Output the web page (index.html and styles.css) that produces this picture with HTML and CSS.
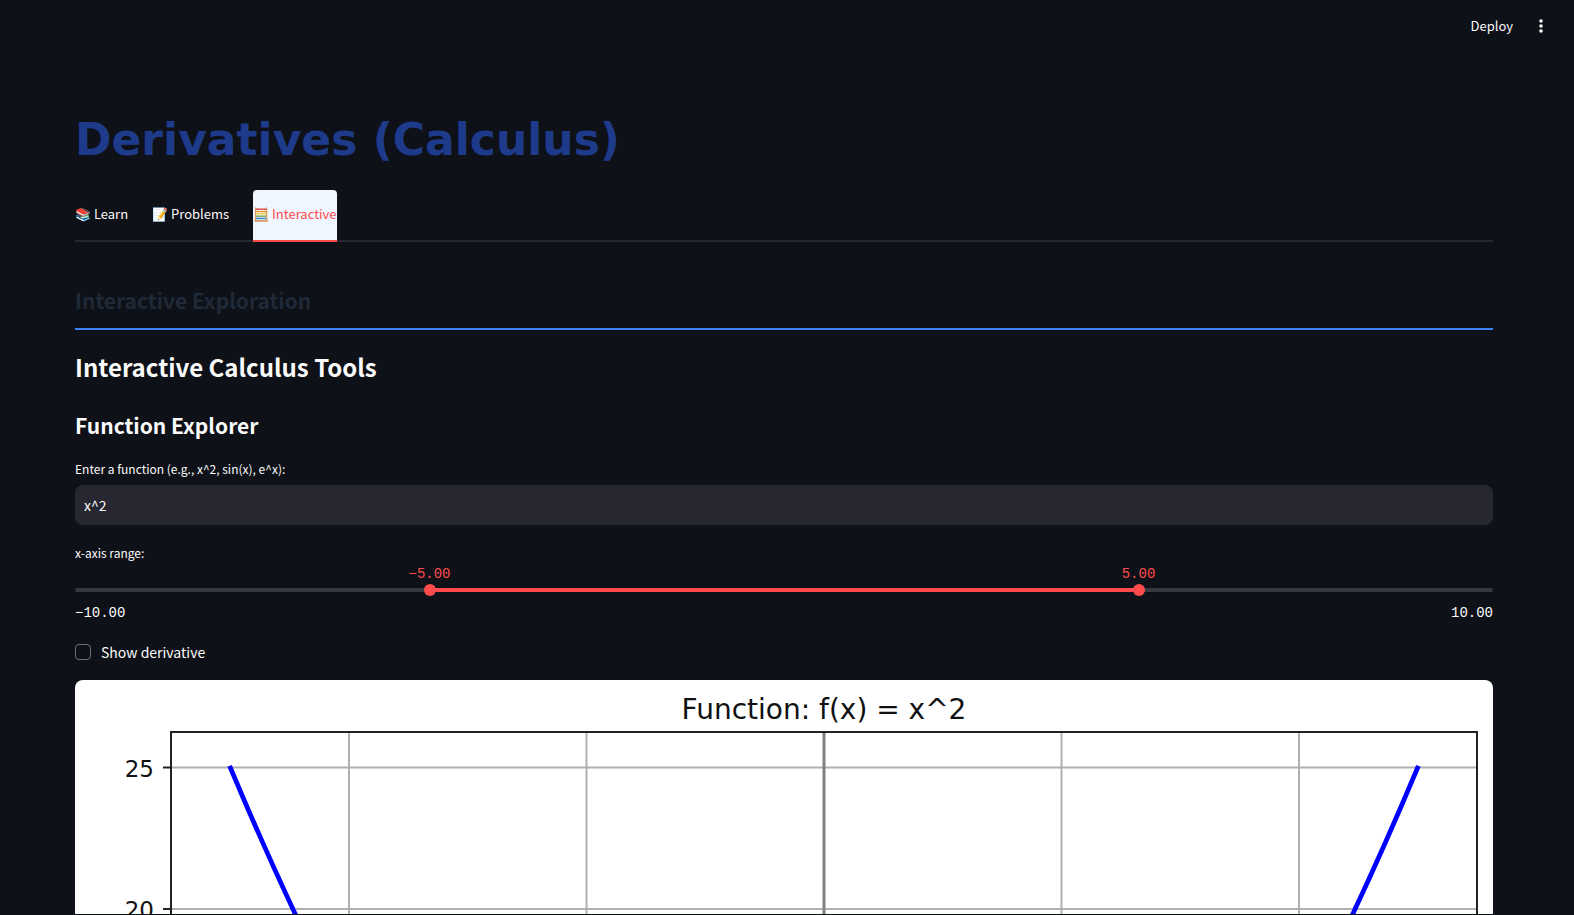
FILE: index.html
```html
<!DOCTYPE html>
<html lang="en">
<head>
<meta charset="utf-8">
<meta name="viewport" content="width=device-width, initial-scale=1">
<title>Derivatives (Calculus)</title>
<link rel="stylesheet" href="styles.css">
</head>
<body>
<div class="app">
  <header class="toolbar">
    <button class="deploy" type="button">Deploy</button>
    <button class="menu" type="button" aria-label="Main menu">
      <svg width="20" height="20" viewBox="0 0 20 20" fill="currentColor" aria-hidden="true"><circle cx="10" cy="5" r="1.800"/><circle cx="10" cy="10" r="1.800"/><circle cx="10" cy="15" r="1.800"/></svg>
    </button>
  </header>
  <main class="content">
    <h1 class="title">Derivatives (Calculus)</h1>
    <div class="tabs" role="tablist">
      <button class="tab" type="button" role="tab" aria-selected="false">📚 Learn</button>
      <button class="tab" type="button" role="tab" aria-selected="false">📝 Problems</button>
      <button class="tab tab-active" type="button" role="tab" aria-selected="true">🧮 Interactive</button>
    </div>
    <h2 class="section">Interactive Exploration</h2>
    <h2 class="heading">Interactive Calculus Tools</h2>
    <h3 class="subheading">Function Explorer</h3>
    <label class="label" for="fn">Enter a function (e.g., x^2, sin(x), e^x):</label>
    <input class="textbox" id="fn" type="text" value="x^2">
    <label class="label range-label" for="xmin">x-axis range:</label>
    <div class="slider">
      <output class="value" for="xmin" style="left:25%">−5.00</output>
      <output class="value" for="xmax" style="left:75%">5.00</output>
      <div class="track"></div>
      <input class="range" id="xmin" type="range" min="-10" max="10" step="0.01" value="-5">
      <input class="range" id="xmax" type="range" min="-10" max="10" step="0.01" value="5" aria-label="x-axis maximum">
    </div>
    <div class="limits"><span>−10.00</span><span>10.00</span></div>
    <label class="check"><input class="box" type="checkbox">Show derivative</label>
    <svg class="chart" viewBox="0 0 1418 890" role="img" aria-label="Plot of f(x) = x^2">
      <rect width="1418" height="890" fill="#fff"/>
      <g stroke="#b0b0b0" stroke-width="2">
        <path d="M274 52V831M511.500 52V831M749 52V831M986.500 52V831M1224 52V831"/>
        <path d="M96 87.500H1402M96 229H1402M96 371H1402M96 512H1402M96 654H1402M96 796H1402"/>
      </g>
      <path d="M749 52V831" stroke="#808080" stroke-width="3"/>
      <path d="M155.500 88Q749 1504 1342.500 88" fill="none" stroke="#00f" stroke-width="4.700" stroke-linecap="square"/>
      <path d="M96 52H1402V831H96ZM88 87.500H96M88 229H96M88 371H96M88 512H96M88 654H96M88 796H96" fill="none" stroke="#222" stroke-width="2"/>
      <g class="chart-text">
        <text x="749" y="39" font-size="28" text-anchor="middle">Function: f(x) = x^2</text>
        <text x="79" y="97" font-size="23" text-anchor="end">25</text>
        <text x="79" y="238" font-size="23" text-anchor="end">20</text>
      </g>
    </svg>
  </main>
</div>
</body>
</html>
```
FILE: styles.css
```css
* { box-sizing: border-box; }

body {
  margin: 0;
  background: #0e1117;
  color: #fafafa;
  font-family: "Noto Sans CJK SC", "Noto Sans", sans-serif;
  font-size: 14px;
  line-height: 24px;
}

button {
  border: 0;
  padding: 0;
  background: none;
  color: inherit;
  font: inherit;
}

.app {
  height: calc(100vh - 1px);
  overflow: hidden;
}

.toolbar {
  display: flex;
  justify-content: flex-end;
  align-items: center;
  gap: 18px;
  height: 52px;
  padding-right: 23px;
}

.deploy { font-size: 13px; }

.menu {
  display: flex;
}

.content {
  display: flex;
  flex-direction: column;
  padding: 61px 81px 0 75px;
}

h1, h2, h3 { margin: 0; }

.title {
  color: #1e3a8a;
  font: bold 44px/54px "DejaVu Sans", sans-serif;
}

.tabs {
  display: flex;
  gap: 24px;
  margin-top: 23px;
  box-shadow: inset 0 -2px #262730;
}

.tab {
  height: 52px;
  padding-bottom: 2px;
  border-bottom: 2px solid transparent;
  border-radius: 4px 4px 0 0;
  font-size: 13px;
}

.tab-active {
  background: #eff6ff;
  border-bottom-color: #ff4b4b;
  color: #ff4b4b;
}

.section {
  margin-top: 41px;
  padding-bottom: 11px;
  border-bottom: 2px solid #3b82f6;
  color: #1f2937;
  font-size: 21px;
  line-height: 34px;
  font-weight: 700;
}

.heading {
  margin-top: 19px;
  font-size: 24px;
  line-height: 36px;
  font-weight: 700;
}

.subheading {
  margin-top: 24px;
  font-size: 21px;
  line-height: 32px;
  font-weight: 700;
}

.label {
  margin-top: 16px;
  font-size: 12px;
  line-height: 24px;
}

.textbox {
  height: 40px;
  margin-top: 4px;
  padding: 0 9px;
  border: 0;
  border-radius: 8px;
  background: #262730;
  color: inherit;
  font: inherit;
}

.slider {
  position: relative;
  height: 30px;
  margin-top: 4px;
}

.value {
  position: absolute;
  top: -3px;
  transform: translateX(-50%);
  color: #ff4b4b;
  font: 14px/16px "Liberation Mono", monospace;
}

.track {
  position: absolute;
  inset: 19px 0 auto;
  height: 4px;
  border-radius: 4px;
  background: linear-gradient(to right, #373940 25%, #ff4b4b 25% 75%, #373940 75%);
}

.range {
  position: absolute;
  top: 15px;
  left: -6px;
  width: calc(100% + 12px);
  height: 12px;
  margin: 0;
  appearance: none;
  background: none;
  pointer-events: none;
}

.range::-webkit-slider-thumb {
  appearance: none;
  width: 12px;
  height: 12px;
  border-radius: 50%;
  background: #ff4b4b;
  pointer-events: auto;
}

.limits {
  display: flex;
  justify-content: space-between;
  margin-top: 6px;
  font: 14px/16px "Liberation Mono", monospace;
}

.check {
  display: flex;
  align-items: center;
  align-self: flex-start;
  gap: 10px;
  margin-top: 19px;
}

.box {
  appearance: none;
  width: 16px;
  height: 16px;
  margin: 0;
  border: 1px solid #6d6f76;
  border-radius: 4px;
}

.chart {
  display: block;
  width: 100%;
  margin-top: 16px;
  border-radius: 8px;
}

.chart-text {
  fill: #111;
  font-family: "DejaVu Sans", sans-serif;
}
```
